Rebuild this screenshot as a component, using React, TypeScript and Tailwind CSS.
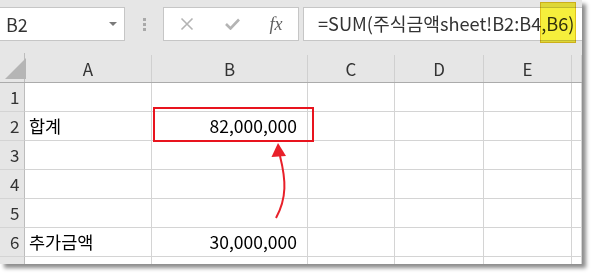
import React from "react";

const font = { fontFamily: '"Noto Sans CJK KR", "Noto Sans", sans-serif' };

interface Column {
  label: string;
  width: string;
}

const columns: Column[] = [
  { label: "A", width: "w-[127px]" },
  { label: "B", width: "w-[156px]" },
  { label: "C", width: "w-[87px]" },
  { label: "D", width: "w-[89px]" },
  { label: "E", width: "w-[88px]" },
  { label: "", width: "w-[10px]" },
];

const rows: { num: string; a: string; b: string }[] = [
  { num: "1", a: "", b: "" },
  { num: "2", a: "합계", b: "82,000,000" },
  { num: "3", a: "", b: "" },
  { num: "4", a: "", b: "" },
  { num: "5", a: "", b: "" },
  { num: "6", a: "추가금액", b: "30,000,000" },
  { num: "", a: "", b: "" },
];

export default function App() {
  return (
    <div className="w-[591px] h-[274px] bg-white" style={font}>
      <div className="relative w-[582px] h-[264px] overflow-hidden bg-[#e6e6e6] shadow-[4px_4px_4px_rgba(0,0,0,0.45)] flex flex-col">
        {/* formula bar */}
        <div className="h-[53px] flex items-start pt-[7px] shrink-0">
          <div className="w-[125px] h-[34px] bg-white border border-l-0 border-[#c6c6c6] flex items-center justify-between pl-[6px] pr-[7px]">
            <span className="text-[18px] text-[#333]">B2</span>
            <svg width="8" height="5" viewBox="0 0 8 5">
              <polygon points="0,0 8,0 4,4" fill="#7a7a7a" />
            </svg>
          </div>
          <div className="w-[38px] h-[34px] flex flex-col items-center justify-center gap-[2px]">
            <span className="w-[3px] h-[3px] bg-[#a9a9a9]" />
            <span className="w-[3px] h-[3px] bg-[#a9a9a9]" />
            <span className="w-[3px] h-[3px] bg-[#a9a9a9]" />
          </div>
          <div className="w-[136px] h-[34px] bg-white border border-[#c6c6c6] flex items-center">
            <div className="w-[46px] flex justify-center">
              <svg width="14" height="14" viewBox="0 0 14 14">
                <path d="M1.5 1.5 L12.5 12.5 M12.5 1.5 L1.5 12.5" stroke="#b4b4b4" strokeWidth="1.6" />
              </svg>
            </div>
            <div className="w-[44px] flex justify-center">
              <svg width="15" height="12" viewBox="0 0 15 12">
                <path d="M1 6 L5.5 10.5 L14 1.5" stroke="#b4b4b4" strokeWidth="2.6" fill="none" />
              </svg>
            </div>
            <div className="w-[44px] flex justify-center">
              <span className="italic text-[18px] text-[#5e5e5e]" style={{ fontFamily: '"Liberation Serif", serif' }}>
                fx
              </span>
            </div>
          </div>
          <div className="relative flex-1 h-[34px] ml-[4px] bg-white border border-r-0 border-[#c6c6c6] flex items-center pl-[14px]">
            <span className="text-[18.2px] text-[#333] whitespace-nowrap">
              =SUM(주식금액sheet!B2:B4,B6)
            </span>
          </div>
        </div>
        {/* highlight over the B6 reference */}
        <div className="absolute left-[540px] top-[2px] w-[36px] h-[41px] bg-[#f6ef3c] mix-blend-multiply border border-[#e2c21c]" />

        {/* column header */}
        <div className="h-[30px] flex shrink-0 border-b border-[#ababab]">
          <div className="w-[29px] border-r border-[#bdbdbd] relative">
            <svg className="absolute left-[5px] bottom-[3px]" width="21" height="21" viewBox="0 0 21 21">
              <polygon points="21,0 21,21 0,21" fill="#b5b5b5" />
            </svg>
          </div>
          {columns.map((c, i) => (
            <div key={i} className={`${c.width} flex flex-col shrink-0`}>
              <div className="h-[1px]" />
              <div className="flex-1 border-r border-[#d0d0d0] flex items-center justify-center text-[17px] text-[#333] mt-[1px]">
                {c.label}
              </div>
            </div>
          ))}
        </div>

        {/* rows */}
        {rows.map((r, ri) => (
          <div key={ri} className="h-[29px] flex shrink-0">
            <div className="w-[29px] border-r border-b border-r-[#bdbdbd] border-b-[#d4d4d4] flex items-center pl-[10px] text-[17px] text-[#333]">
              {r.num}
            </div>
            {columns.map((c, ci) => (
              <div
                key={ci}
                className={`${c.width} shrink-0 bg-white border-r border-b border-[#d4d4d4] flex items-center text-[17.5px] text-black ${
                  ci === 1 ? "justify-end pr-[10px]" : "pl-[4px]"
                }`}
              >
                {ci === 0 ? r.a : ci === 1 ? r.b : ""}
              </div>
            ))}
          </div>
        ))}

        {/* red box and arrow */}
        <div className="absolute left-[153px] top-[107px] w-[161px] h-[35px] border-2 border-[#e8141e]" />
        <svg className="absolute left-0 top-0" width="582" height="264" viewBox="0 0 582 264">
          <path d="M276 218 C 287 198, 286 180, 280 156" stroke="#e8202a" strokeWidth="2" fill="none" />
          <polygon points="278,143 271.5,157 286,156" fill="#e8202a" />
        </svg>
      </div>
    </div>
  );
}
